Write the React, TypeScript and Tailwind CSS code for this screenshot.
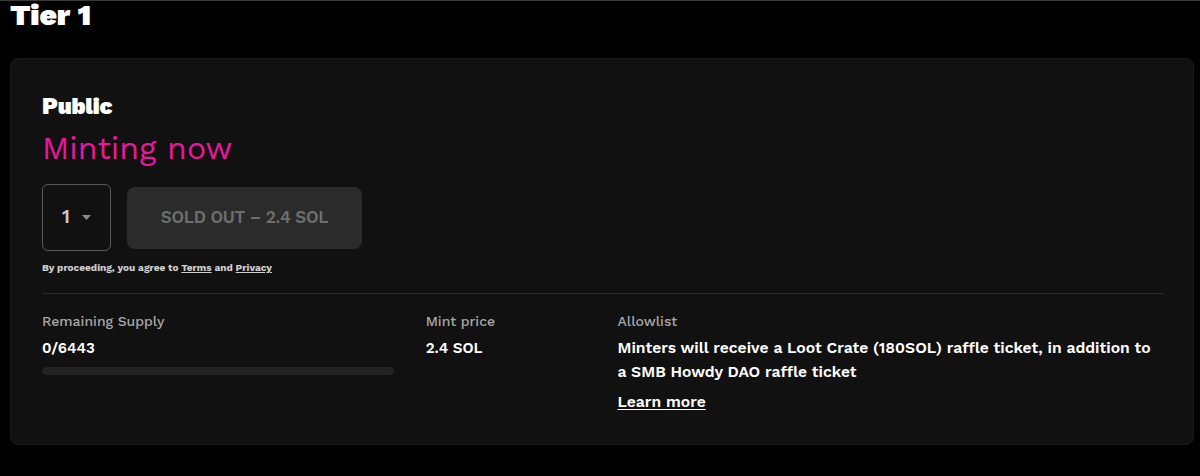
import React from "react";

export default function App() {
  return (
    <div
      className="w-[1200px] h-[476px] bg-black border-t border-[#3a3a3a]"
      style={{ fontFamily: "'Work Sans', Inter, 'Open Sans', sans-serif" }}
    >
      <h1 className="pl-[10px] pt-[1px] text-[30px] leading-[26px] font-black text-white tracking-[0px]">Tier 1</h1>
      <div className="mt-[30px] ml-[10px] w-[1184px] h-[387px] rounded-[8px] bg-[#111111] border border-[#1a1a1a] px-[31px] pt-[34px]">
        <div className="text-[22.5px] leading-[26px] font-black text-white tracking-[-0.2px]">Public</div>
        <div className="mt-[10px] text-[32px] leading-[38px] text-[#e8179e] font-normal">Minting now</div>
        <div className="mt-[17px] flex items-center gap-[16px]">
          <div className="w-[69px] h-[67px] rounded-[6px] border border-[#5a5a5a] flex items-center justify-center gap-[12px] text-[#c8c8c8] text-[19px] font-semibold">
            <span>1</span>
            <svg width="9" height="5" viewBox="0 0 9 5"><path d="M0 0h9L4.5 5z" fill="#8a8a8a" /></svg>
          </div>
          <div className="w-[235px] h-[62px] rounded-[8px] bg-[#2b2b2b] flex items-center justify-center text-[17px] font-semibold text-[#6e6e6e] tracking-[-0.3px]">
            SOLD OUT – 2.4 SOL
          </div>
        </div>
        <div className="mt-[11px] text-[10px] leading-[12px] font-bold text-[#cfcfcf]">
          By proceeding, you agree to <span className="underline">Terms</span> and <span className="underline">Privacy</span>
        </div>
        <div className="mt-[19px] h-px bg-[#2a2a2a] w-[1122px]" />
        <div className="mt-[19px] flex">
          <div className="w-[384px]">
            <div className="text-[14px] leading-[16px] font-medium text-[#a8a8a8]">Remaining Supply</div>
            <div className="mt-[10px] text-[15px] leading-[18px] font-semibold text-white">0/6443</div>
            <div className="mt-[10px] w-[352px] h-[8px] rounded-full bg-[#222222]" />
          </div>
          <div className="w-[192px]">
            <div className="text-[14px] leading-[16px] font-medium text-[#a8a8a8]">Mint price</div>
            <div className="mt-[10px] text-[15px] leading-[18px] font-semibold text-white">2.4 SOL</div>
          </div>
          <div className="w-[545px]">
            <div className="text-[14px] leading-[16px] font-medium text-[#a8a8a8]">Allowlist</div>
            <div className="mt-[7px] text-[15.7px] leading-[24px] font-semibold text-white">
              Minters will receive a Loot Crate (180SOL) raffle ticket, in addition to a SMB Howdy DAO raffle ticket
            </div>
            <div className="mt-[9px] text-[15.7px] leading-[18px] font-semibold text-white underline underline-offset-2">Learn more</div>
          </div>
        </div>
      </div>
    </div>
  );
}
